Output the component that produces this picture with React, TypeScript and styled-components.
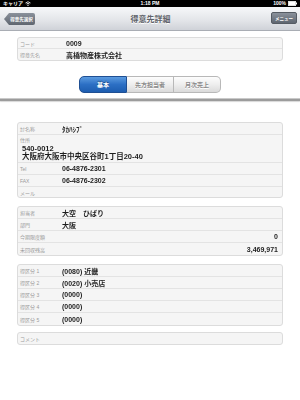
import React from "react";
import styled, { createGlobalStyle } from "styled-components";

const Global = createGlobalStyle`
  html, body { margin: 0; padding: 0; background: #fff; }
  body { width: 300px; height: 400px; overflow: hidden; font-family: "Liberation Sans", "Noto Sans CJK JP", sans-serif; -webkit-font-smoothing: antialiased; }
  * { box-sizing: border-box; }
`;

const Screen = styled.div`
  width: 300px;
  height: 400px;
  display: flex;
  flex-direction: column;
  background: #fff;
`;

const StatusBar = styled.div`
  height: 7px;
  flex: none;
  background: #000;
  color: #fff;
  display: grid;
  grid-template-columns: 1fr auto 1fr;
  align-items: center;
  padding: 0 3px;
  font-size: 5px;
  line-height: 7px;
  font-weight: bold;
`;

const StatusLeft = styled.div`
  display: flex;
  align-items: center;
  gap: 2px;
`;

const StatusRight = styled.div`
  display: flex;
  align-items: center;
  justify-content: flex-end;
  gap: 2px;
`;

const NavBar = styled.div`
  height: 24px;
  flex: none;
  background: linear-gradient(#f7f8fa, #e2e4e8 60%, #cfd2d8);
  border-bottom: 1px solid #a9adb4;
  display: grid;
  grid-template-columns: 1fr auto 1fr;
  align-items: center;
  padding: 0 3px 0 4px;
`;

const Title = styled.div`
  font-size: 8px;
  font-weight: bold;
  color: #5f636a;
  text-shadow: 0 1px 0 #fff;
`;

const BackButton = styled.div`
  justify-self: start;
  height: 12px;
  width: 31px;
  margin-top: 1px;
  background: linear-gradient(#8a919b, #5f6670);
  clip-path: polygon(0 50%, 5px 0, 100% 0, 100% 100%, 5px 100%);
  border-radius: 0 2px 2px 0;
  color: #fff;
  font-size: 4.5px;
  font-weight: bold;
  display: flex;
  align-items: center;
  justify-content: center;
  padding-left: 4px;
`;

const MenuButton = styled.div`
  justify-self: end;
  height: 12px;
  width: 26px;
  margin-top: -1px;
  background: linear-gradient(#8a919b, #5f6670);
  border: 1px solid #555b63;
  border-radius: 2px;
  color: #fff;
  font-size: 4.5px;
  font-weight: bold;
  display: flex;
  align-items: center;
  justify-content: center;
`;

const Card = styled.div<{ $mt?: number }>`
  flex: none;
  margin: ${(p) => p.$mt ?? 8}px 17px 0;
  background: #f5f5f5;
  border: 1px solid #dcdcdc;
  border-radius: 3px;
  display: flex;
  flex-direction: column;
  overflow: hidden;
`;

const Row = styled.div<{ $labelW?: number; $h?: number }>`
  height: ${(p) => p.$h ?? 12}px;
  display: grid;
  grid-template-columns: ${(p) => p.$labelW ?? 42}px 1fr;
  align-items: center;
  padding: 0 4px 0 2px;
  border-bottom: 1px solid #e3e3e3;
  &:last-child { border-bottom: none; }
`;

const Label = styled.div`
  font-size: 5px;
  color: #9a9a9a;
  white-space: nowrap;
`;

const Value = styled.div<{ $right?: boolean }>`
  font-size: 7px;
  font-weight: bold;
  color: #1e1e1e;
  white-space: nowrap;
  text-align: ${(p) => (p.$right ? "right" : "left")};
  will-change: transform;
`;

const BlockRow = styled.div`
  display: flex;
  flex-direction: column;
  padding: 0 4px 1px 2px;
  height: 28px;
  border-bottom: 1px solid #e3e3e3;
`;

const BlockLabel = styled.div`
  font-size: 5px;
  color: #9a9a9a;
  height: 10px;
  line-height: 10px;
`;

const BlockLine = styled.div`
  font-size: 7.5px;
  font-weight: bold;
  color: #1e1e1e;
  line-height: 8px;
  padding-left: 2px;
  white-space: nowrap;
  will-change: transform;
`;

const Segmented = styled.div`
  flex: none;
  margin: 15px auto 0;
  display: flex;
  height: 17px;
  width: 142px;
`;

const Segment = styled.div<{ $active?: boolean }>`
  flex: 1;
  display: flex;
  align-items: center;
  justify-content: center;
  font-size: 6px;
  font-weight: bold;
  color: ${(p) => (p.$active ? "#fff" : "#8a8a8a")};
  background: ${(p) =>
    p.$active
      ? "linear-gradient(#5b9be0, #2c6fc4 50%, #1d5db0)"
      : "linear-gradient(#fdfdfd, #eeeeee 50%, #dadada)"};
  border: 1px solid ${(p) => (p.$active ? "#1f4f93" : "#b8b8b8")};
  border-left-width: 0;
  &:first-child { border-radius: 5px 0 0 5px; border-left-width: 1px; }
  &:last-child { border-radius: 0 5px 5px 0; }
  text-shadow: ${(p) => (p.$active ? "0 -1px 0 #1a4a8a" : "0 1px 0 #fff")};
`;

const Divider = styled.div`
  flex: none;
  margin-top: 5px;
  height: 3px;
  border-top: 1px solid #c9c9c9;
  background: #9c9c9c;
  box-shadow: 0 1px 1px #d8d8d8;
`;

const Wifi = () => (
  <svg width="6" height="5" viewBox="0 0 12 10">
    <path d="M1 4 A7 7 0 0 1 11 4" stroke="#fff" strokeWidth="1.6" fill="none" />
    <path d="M3 6 A4.2 4.2 0 0 1 9 6" stroke="#fff" strokeWidth="1.6" fill="none" />
    <circle cx="6" cy="8.5" r="1.3" fill="#fff" />
  </svg>
);

const Battery = () => (
  <svg width="9" height="5" viewBox="0 0 18 10">
    <rect x="0.5" y="0.5" width="15" height="9" fill="#fff" stroke="#fff" />
    <rect x="16" y="3" width="2" height="4" fill="#fff" />
  </svg>
);

export default function App() {
  return (
    <Screen>
      <Global />
      <StatusBar>
        <StatusLeft>
          <span>キャリア</span>
          <Wifi />
        </StatusLeft>
        <span>1:18 PM</span>
        <StatusRight>
          <span>100%</span>
          <Battery />
        </StatusRight>
      </StatusBar>
      <NavBar>
        <BackButton>得意先選択</BackButton>
        <Title>得意先詳細</Title>
        <MenuButton>メニュー</MenuButton>
      </NavBar>

      <Card $mt={6}>
        <Row $labelW={46} $h={11}>
          <Label>コード</Label>
          <Value>0009</Value>
        </Row>
        <Row $labelW={46} $h={11}>
          <Label>得意先名</Label>
          <Value>高橋物産株式会社</Value>
        </Row>
      </Card>

      <Segmented>
        <Segment $active>基本</Segment>
        <Segment>先方担当者</Segment>
        <Segment>月次売上</Segment>
      </Segmented>

      <Divider />

      <Card $mt={21}>
        <Row>
          <Label>ｶﾅ名称</Label>
          <Value>ﾀｶﾊｼﾌﾞ</Value>
        </Row>
        <BlockRow>
          <BlockLabel>住所</BlockLabel>
          <BlockLine>540-0012</BlockLine>
          <BlockLine>大阪府大阪市中央区谷町1丁目20-40</BlockLine>
        </BlockRow>
        <Row>
          <Label>Tel</Label>
          <Value>06-4876-2301</Value>
        </Row>
        <Row>
          <Label>FAX</Label>
          <Value>06-4876-2302</Value>
        </Row>
        <Row $h={10}>
          <Label>メール</Label>
          <Value></Value>
        </Row>
      </Card>

      <Card>
        <Row>
          <Label>担当者</Label>
          <Value>大空　ひばり</Value>
        </Row>
        <Row>
          <Label>部門</Label>
          <Value>大阪</Value>
        </Row>
        <Row>
          <Label>今期限度額</Label>
          <Value $right>0</Value>
        </Row>
        <Row>
          <Label>未回収残高</Label>
          <Value $right>3,469,971</Value>
        </Row>
      </Card>

      <Card>
        <Row>
          <Label>得区分 1</Label>
          <Value>(0080) 近畿</Value>
        </Row>
        <Row>
          <Label>得区分 2</Label>
          <Value>(0020) 小売店</Value>
        </Row>
        <Row>
          <Label>得区分 3</Label>
          <Value>(0000)</Value>
        </Row>
        <Row>
          <Label>得区分 4</Label>
          <Value>(0000)</Value>
        </Row>
        <Row>
          <Label>得区分 5</Label>
          <Value>(0000)</Value>
        </Row>
      </Card>

      <Card $mt={6}>
        <Row $h={11}>
          <Label>コメント</Label>
          <Value></Value>
        </Row>
      </Card>
    </Screen>
  );
}
